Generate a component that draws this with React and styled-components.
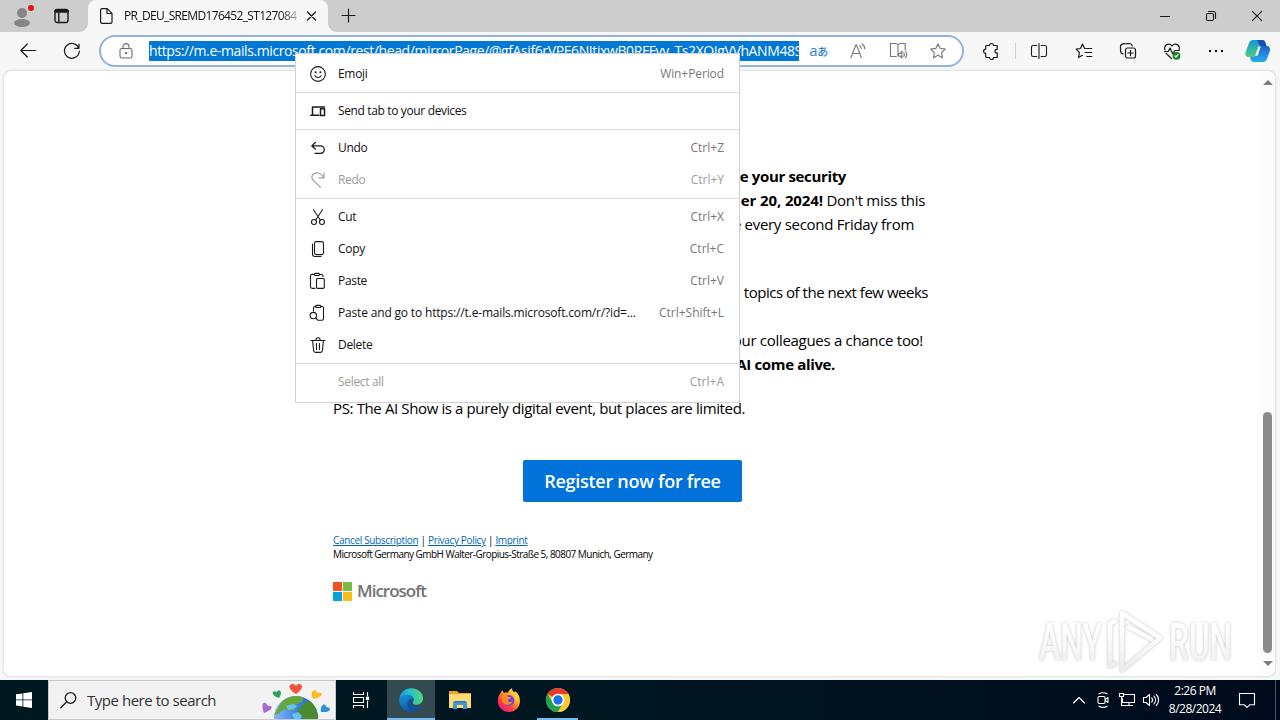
import React from "react";
import styled, { createGlobalStyle } from "styled-components";

const GlobalStyle = createGlobalStyle`
  * {
    box-sizing: border-box;
  }

  body {
    margin: 0;
    overflow: hidden;
    font-family: "Open Sans", "Noto Sans", sans-serif;
  }
`;

const Screen = styled.div`
  position: relative;
  display: flex;
  flex-direction: column;
  width: 1280px;
  height: 720px;
  background: #f7f7f7;
  color: #111;
`;

const Svg = styled.svg`
  display: block;
  flex: none;
  overflow: visible;
  fill: none;
  stroke: ${(props) => props.$color || "#1b1b1b"};
  stroke-width: ${(props) => props.$stroke || 1.1};
  stroke-linecap: round;
  stroke-linejoin: round;
`;

// ---------- tab strip ----------

const TabStrip = styled.div`
  display: flex;
  height: 32px;
  background: #cdcdcd;
`;

const Slot = styled.div`
  display: flex;
  flex: none;
  align-items: center;
  justify-content: center;
  width: ${(props) => props.$w}px;
  height: 32px;
`;

const Tab = styled.div`
  position: relative;
  display: flex;
  align-items: center;
  width: 240px;
  height: 32px;
  margin-left: 9px;
  padding: 0 10px 0 12px;
  border-radius: 8px 8px 0 0;
  background: #f7f7f7;

  &::before,
  &::after {
    content: "";
    position: absolute;
    bottom: 0;
    width: 8px;
    height: 8px;
  }
  &::before {
    left: -8px;
    background: radial-gradient(circle at 0 0, #cdcdcd 7.5px, #f7f7f7 8px);
  }
  &::after {
    right: -8px;
    background: radial-gradient(circle at 8px 0, #cdcdcd 7.5px, #f7f7f7 8px);
  }
`;

const TabTitle = styled.div`
  width: 174px;
  margin: 0 8px 1px 11px;
  overflow: hidden;
  white-space: nowrap;
  font-size: 12px;
  letter-spacing: -0.66px;
  mask-image: linear-gradient(90deg, #000 156px, rgba(0, 0, 0, 0.25) 174px);
`;

const WindowButtons = styled.div`
  display: flex;
  margin-left: auto;
`;

// ---------- toolbar ----------

const Toolbar = styled.div`
  display: flex;
  align-items: center;
  height: 38px;
  padding: 0 0 0 6px;
`;

const Address = styled.div`
  display: flex;
  align-items: center;
  width: 865px;
  height: 32px;
  margin: 0 5px;
  padding-left: 2px;
  border: 2px solid #94b2de;
  border-radius: 16px;
  background: #fff;
`;

const Url = styled.div`
  width: 650px;
  height: 20px;
  margin-left: 1px;
  overflow: hidden;
  background: #0078d4;
  color: #fff;
  font-size: 14px;
  line-height: 20px;
  letter-spacing: -0.4px;
  white-space: nowrap;
`;

const Translate = styled.span`
  color: #2f7fd0;
  font-family: "Open Sans", "Noto Sans CJK JP", sans-serif;
  font-size: 15px;
  line-height: 16px;
  letter-spacing: -0.5px;

  small {
    font-size: 11px;
    font-weight: 500;
  }
`;

const Divider = styled.div`
  width: 1px;
  height: 16px;
  margin: 0 1px 0 2px;
  background: #d0d0d0;
`;

// ---------- page ----------

const Page = styled.div`
  display: flex;
  width: 1273px;
  height: 607px;
  margin: 0 0 3px 3px;
  border: 1px solid #e4e4e4;
  border-radius: 8px;
  background: #fff;
  box-shadow: 0 0 2px rgba(0, 0, 0, 0.1);
`;

const Mail = styled.div`
  flex: 1;
  padding: 93px 0 0 329px;
`;

const Line = styled.p`
  width: ${(props) => props.$w}px;
  height: 24px;
  margin: 0 0 ${(props) => props.$after || 0}px;
  font-size: 15px;
  line-height: 24px;
  letter-spacing: ${(props) => props.$ls || -0.3}px;
  text-align: right;
  white-space: nowrap;
  color: #000;

  b {
    letter-spacing: ${(props) => props.$boldLs || -0.35}px;
  }
`;

const Register = styled.button`
  display: block;
  width: 219px;
  height: 42px;
  margin: 40px 0 31px 190px;
  padding: 0;
  border: 0;
  border-radius: 2px;
  background: #0072da;
  color: #fff;
  font-family: inherit;
  font-size: 18px;
  font-weight: 600;
  letter-spacing: -0.28px;
  white-space: nowrap;
`;

const Small = styled.div`
  height: 14px;
  font-size: 10px;
  line-height: 14px;
  letter-spacing: ${(props) => props.$ls}px;
  white-space: nowrap;
  color: #000;

  a {
    color: #0067b8;
    text-decoration: underline;
  }
`;

const Logo = styled.div`
  display: flex;
  align-items: center;
  gap: 5px;
  height: 20px;
  margin-top: 20px;
  color: #737373;
  font-size: 17px;
  font-weight: 600;
  letter-spacing: -1px;
  line-height: 20px;
`;

const LogoName = styled.span`
  padding-bottom: 1px;
`;

const LogoTiles = styled.div`
  display: grid;
  grid-template-columns: 9px 9px;
  grid-template-rows: 9px 9px;
  gap: 1px;
`;

const Tile = styled.i`
  background: ${(props) => props.$color};
`;

const ScrollBar = styled.div`
  display: flex;
  flex-direction: column;
  align-items: center;
  justify-content: space-between;
  width: 15px;
  padding: 9px 0 10px;
  border-radius: 0 8px 8px 0;
  background: #fcfcfc;
`;

const Arrow = styled.i`
  border: 5px solid transparent;
  border-top-width: 0;
  border-bottom: 5px solid #7c7c7c;
  transform: ${(props) => (props.$down ? "rotate(180deg)" : "none")};
`;

const Thumb = styled.div`
  width: 9px;
  height: 241px;
  margin: auto 0 8px;
  border-radius: 5px;
  background: #8b8b8b;
`;

const Watermark = styled.svg`
  position: absolute;
  left: 1030px;
  top: 604px;
  overflow: visible;
  filter: drop-shadow(0 0 1.5px rgba(0, 0, 0, 0.32));
  font-family: Roboto, sans-serif;
  font-weight: 500;
  opacity: 0.75;
`;

// ---------- context menu ----------

const Menu = styled.div`
  position: absolute;
  left: 295px;
  top: 53px;
  width: 445px;
  height: 350px;
  padding: 4px 0;
  border: 1px solid #d2d2d2;
  background: #fff;
`;

const Item = styled.div`
  display: flex;
  align-items: center;
  height: 32px;
  padding: 0 15px 0 14px;
  font-size: 12px;
  color: ${(props) => (props.$off ? "#9b9b9b" : "#111")};
`;

const ItemIcon = styled.div`
  width: 16px;
  height: 16px;
  margin-right: 12px;
`;

const Label = styled.span`
  padding-bottom: 2px;
  letter-spacing: ${(props) => props.$ls || -0.32}px;
  white-space: nowrap;
`;

const Shortcut = styled.span`
  margin-left: auto;
  padding-bottom: 2px;
  color: ${(props) => (props.$off ? "#9b9b9b" : "#777")};
  letter-spacing: ${(props) => props.$ls || 0}px;
`;

const Separator = styled.div`
  height: 1px;
  margin: 2px 0;
  background: #dcdcdc;
`;

// ---------- taskbar ----------

const Taskbar = styled.div`
  display: flex;
  height: 40px;
  background: linear-gradient(90deg, #001820 0, #001722 45%, #000a1c 100%);
`;

const TaskButton = styled.div`
  display: flex;
  align-items: center;
  justify-content: center;
  width: ${(props) => props.$w || 49}px;
  height: 40px;
  background: ${(props) => (props.$active ? "#344a51" : "transparent")};
  box-shadow: ${(props) => (props.$running ? "inset 0 -2px #76b9ed" : "none")};
`;

const Search = styled.div`
  display: flex;
  align-items: center;
  width: 288px;
  height: 40px;
  padding-left: 11px;
  border: 1px solid #c6cacb;
  background: #f2f2f2;
  color: #333;
  font-size: 15px;
  letter-spacing: -0.47px;
  white-space: nowrap;
  overflow: hidden;
`;

const SearchText = styled.span`
  width: 173px;
  margin-left: 10px;
`;

const Tray = styled.div`
  display: flex;
  align-items: center;
  margin-left: auto;
`;

const TrayIcon = styled.div`
  display: flex;
  justify-content: center;
  width: 24px;
`;

const Clock = styled.div`
  width: 56px;
  margin-left: 4px;
  color: #fff;
  font-size: 12px;
  line-height: 18px;
  letter-spacing: -0.5px;
  text-align: center;
  white-space: nowrap;
`;

const ShowDesktop = styled.div`
  width: 5px;
  height: 40px;
  margin-left: 4px;
  border-left: 1px solid #4b5563;
`;

// ---------- icons ----------

const Icon = ({ size = 16, color, stroke, children }) => (
  <Svg
    width={size}
    height={size}
    viewBox={`0 0 ${size} ${size}`}
    $color={color}
    $stroke={stroke}
  >
    {children}
  </Svg>
);

const menuIcons = {
  emoji: (
    <Icon>
      <circle cx="8" cy="8" r="7.4" />
      <path d="M4.8 9.8c1.4 2.2 5 2.2 6.4 0" />
      <circle cx="5.6" cy="6.2" r=".5" fill="#111" />
      <circle cx="10.4" cy="6.2" r=".5" fill="#111" />
    </Icon>
  ),
  send: (
    <Icon stroke={1.5}>
      <path d="M2.5 11.5V4h12M.8 12.2h8" />
      <rect x="10.5" y="5.8" width="4" height="6.6" />
    </Icon>
  ),
  undo: (
    <Icon stroke={1.3}>
      <path d="M5.3 2.5 1.8 5.9l3.500 3.200M2.300 5.900h8.300a3.700 3.700 0 0 1 0 7.400H5" />
    </Icon>
  ),
  redo: (
    <Icon color="#a0a0a0" stroke={1.2}>
      <path d="M14 .8v5H9M13.6 5.4C11-.2 3.9-.2 2.2 3.6c-.8 2-.1 3.5 1.2 4.8l7 6.8" />
    </Icon>
  ),
  cut: (
    <Icon>
      <path d="m3.5.8 7 10.4M12.5.8l-7 10.4" />
      <circle cx="4" cy="13" r="2.5" />
      <circle cx="12" cy="13" r="2.5" />
    </Icon>
  ),
  copy: (
    <Icon>
      <rect x="4.5" y=".6" width="9" height="13" rx="1.8" />
      <path d="M2.5 3v10c0 1.7 1 2.5 2.5 2.5h6" />
    </Icon>
  ),
  paste: (
    <Icon>
      <path d="M5 15.4H2.2c-1 0-1.7-.6-1.7-1.6V3c0-1 .6-1.6 1.6-1.6h2.4M9.5 1.5h2c1 0 1.5.6 1.5 1.5v.6" />
      <rect x="4.5" y=".4" width="5" height="2.1" rx="1" />
      <rect x="6.5" y="5.5" width="7.8" height="9.9" rx="1.2" />
    </Icon>
  ),
  pasteGo: (
    <Icon>
      <path d="M3.5 6V3c0-1 .5-1.5 1.5-1.5h1M11 1.5h1c1 0 1.5.5 1.5 1.5v10.5c0 1.2-.6 1.8-1.6 1.8H9.5" />
      <rect x="5.500" y=".4" width="5.500" height="2.1" rx="1" />
      <circle cx="3.300" cy="10.6" r="3.2" />
      <path d="m5.700 13 2.6 2.5" />
    </Icon>
  ),
  trash: (
    <Icon>
      <path d="M1 3.5h14M5.8 3.3c0-3.5 4.4-3.5 4.4 0M2.6 3.7l1 9.8c.1 1.2.8 1.9 1.9 1.9h5c1.1 0 1.8-.7 1.9-1.9l1-9.8M6.5 6.5v6M9.5 6.5v6" />
    </Icon>
  ),
};

const Lock = () => (
  <Icon color="#6d6d6d">
    <rect x="2" y="5.5" width="12" height="9.5" rx="1.8" />
    <path d="M5 5.5V3.6a3 3 0 0 1 6 0v1.9" />
    <circle cx="8" cy="10.2" r=".6" fill="#6d6d6d" />
  </Icon>
);

const ReadAloud = () => (
  <Icon color="#777">
    <path d="M.8 14.8 6 1.8h.4l5 13M2.5 10.5h7.2M9.8 2.8c1 .7 1.5 1.7 1.5 3M12 .8c1.8 1.2 2.7 3 2.7 5" />
  </Icon>
);

const Reader = () => (
  <Icon size={18} color="#777">
    <path d="M9 2.8V14M9 2.8C8.4 2 7.5 1.5 6.5 1.5h-5v13h5.8M9 2.8c.6-.8 1.5-1.3 2.5-1.3h4.7V8" />
    <path d="M9.5 11.5H11l2-2v6.5l-2-2H9.5zM14.8 11c.8 1 .8 2.5 0 3.5M16.5 9.7c1.5 1.8 1.5 4.3 0 6.1" />
  </Icon>
);

const Star = ({ color }) => (
  <Icon color={color}>
    <path d="m8 .7 2.2 4.7 5.1.6-3.7 3.6.9 5.2L8 12.3l-4.5 2.5.9-5.2L.7 6l5.1-.6z" />
  </Icon>
);

const Puzzle = () => (
  <Icon stroke={1.2}>
    <path d="M4.800 2.500h1.700a2 2 0 0 1 4 0h3.700v3.900c-3-.700-3 4.200 0 3.500v4.600h-3.700a2 2 0 0 1-4 0H3.700c-.700 0-1-.400-1-1v-3.100a2.100 2.100 0 0 1 0-4.200V3.500c0-.600.400-1 1-1z" />
  </Icon>
);

const Split = () => (
  <Icon>
    <path d="M8 .5v15M5.8 2.5H2.2c-1 0-1.700.6-1.700 1.6v7.8c0 1 .7 1.600 1.700 1.600h3.600M10.200 2.500h3.600c1 0 1.700.6 1.700 1.600v7.800c0 1-.7 1.600-1.700 1.600h-3.600" />
  </Icon>
);

const Favorites = () => (
  <Icon stroke={1.2}>
    <path d="M10 5.5H8.6L6.5.9 4.4 5.5l-4.2.6 3.2 3.4-.9 5 4-2.2M10.8 5.5h5M9 9.5h6.8M10.8 13.5h5" />
  </Icon>
);

const Collections = () => (
  <Icon stroke={1.2}>
    <rect x="5.5" y="5" width="10" height="10" rx="2" />
    <path d="M10.5 7.3v5.4M7.8 10h5.4M3.2 11C1.6 10.800.7 9.600.6 8.200L.5 3.800C.5 2 1.400.9 3.200.8l6-.3c1.600 0 2.700.8 3 2.300" />
  </Icon>
);

const Heart = () => (
  <Icon stroke={1.2}>
    <path d="M.8 7C-.3 1.8 5-.7 8 2.8 11-.7 16.3 1.8 15.2 7M2 10.2 7.5 15.5M.5 8.5h3.8L6 5l2.800 6 2-3.500h4.500" />
    <circle cx="12.5" cy="12.8" r="3.3" fill="#16831d" stroke="#16831d" />
    <path d="m11 13 1 1 2-2.400" stroke="#fff" />
  </Icon>
);

const Copilot = () => (
  <Svg width="26" height="26" viewBox="0 0 26 26">
    <defs>
      <linearGradient id="cpA" x1="0" y1="0" x2="0" y2="1">
        <stop offset="0" stopColor="#1597d4" />
        <stop offset=".7" stopColor="#35c09a" />
        <stop offset="1" stopColor="#63c679" />
      </linearGradient>
      <linearGradient id="cpB" x1="0" y1="0" x2="0" y2="1">
        <stop offset="0" stopColor="#1763c6" />
        <stop offset=".6" stopColor="#278ee8" />
        <stop offset="1" stopColor="#19b2e5" />
      </linearGradient>
    </defs>
    <g stroke="none">
      <path d="M8 2h9c2 0 3 1 3.5 3l1 3h-6l-3 9c-.6 1.5-1.5 2-3 2H4c-3 0-4-2-3.4-5L4 5c.7-2 2-3 4-3z" fill="url(#cpA)" />
      <path d="M16 8h6c2.5 0 3.5 2 2.8 5L22 21c-.8 2-2 3-4 3H9c-2 0-3-1-3.5-3L5 19h3c2 0 3-.7 3.6-2.5L14 9.500c.4-1 1-1.500 2-1.500z" fill="url(#cpB)" />
      <path d="M12 2h5c2 0 3 1 3.5 3l1 3H16c-1.500 0-2-1-2.500-3z" fill="#174fae" />
      <path d="M13.500 8.500h2.200l-3 9h-2.500z" fill="#fff" />
    </g>
  </Svg>
);

const Earth = () => (
  <Svg width="72" height="38" viewBox="0 0 72 38">
    <defs>
      <linearGradient id="sea">
        <stop offset="0" stopColor="#8ab4fb" />
        <stop offset=".5" stopColor="#3c86ea" />
        <stop offset="1" stopColor="#185fbe" />
      </linearGradient>
      <clipPath id="globe">
        <circle cx="36" cy="37" r="22" />
      </clipPath>
    </defs>
    <g stroke="none">
      <circle cx="36" cy="37" r="22" fill="url(#sea)" />
      <g clipPath="url(#globe)">
        <path d="M21 22c6-7 14-9 21-7l1 5-6 3-4 2 3 3-5 2-7-2-6 5-4 1z" fill="#67a83b" />
        <path d="M40 26l7-6 6 1 8 15-3 4H44l-3-6-5-2z" fill="#4a8b31" />
        <path d="m26 25 7-2 4 2-3 3-6 1zM32 33l6-2 4 4-3 5-5-2z" fill="#66c4f5" />
      </g>
      <path d="M36 13c-13-8-3-13 0-8 3-5 12 0 0 8z" fill="#f0543c" />
      <path d="M19 17c-10-3-6-9-2-6 1-4 7-1 2 6z" fill="#2c9f5c" />
      <path d="M53 18c-4-9 3-11 4-6 6-2 8 4-4 6z" fill="#f9bd24" />
      <path d="M4 32c-4-11 1-13 4-7 5-1 6 4-4 7z" fill="#a56bd0" />
      <path d="M61 31c-1-9 5-9 5-5 6 0 6 6-5 5z" fill="#2990df" />
    </g>
  </Svg>
);

const EdgeLogo = () => (
  <Svg width="24" height="24" viewBox="0 0 24 24">
    <defs>
      <linearGradient id="edA" x1="0" y1=".4" x2="1" y2=".3">
        <stop offset="0" stopColor="#1c9ee2" />
        <stop offset=".5" stopColor="#28c3c3" />
        <stop offset="1" stopColor="#58d870" />
      </linearGradient>
      <linearGradient id="edB" x1="0" y1="0" x2=".5" y2="1">
        <stop offset="0" stopColor="#1a94dd" />
        <stop offset="1" stopColor="#0c59a4" />
      </linearGradient>
    </defs>
    <g stroke="none">
      <path d="M.3 11C1 4.5 6 .2 12 .2c7 0 12 4.5 12 10 0 4-3 6.5-6.5 6.5-3 0-4-1.2-3.8-2 .3-.8 1-1.2 1-2.9C14.7 9 12 7 8.5 7 4.5 7 1.8 8.5.3 11z" fill="url(#edA)" />
      <path d="M.3 12C.8 8.5 4.3 6.8 8 6.8c3.8 0 6.5 2 6.7 5C12 10 8.6 12 8.6 15.5c0 4 3.4 7 8 7-1.5 1-3 1.3-4.6 1.3C5 23.8 0 18.5.3 12z" fill="url(#edB)" />
      <path d="M8.7 15.5c0-2.5 1.8-4.8 4.6-4.8-3 4 1 8.3 5 8.3 1.9 0 3-.7 3.800-1 1-.4 1.300.4.800 1.100-1.300 1.700-3.500 3.500-6.300 3.800-4.500.3-8-3-7.900-7.400z" fill="#124f93" />
    </g>
  </Svg>
);

const FolderLogo = () => (
  <Svg width="22" height="20" viewBox="0 0 22 20">
    <g stroke="none">
      <path d="M0 1h8l2 2h12v15H0z" fill="#e9a520" />
      <path d="M0 4h22v14H0z" fill="#ffda72" />
      <path d="M4 19v-6c0-1.200.8-2 2-2h10c1.200 0 2 .8 2 2v6h-4v-4H8v4z" fill="#3e98d8" />
      <path d="M6 11h10v1.500H6z" fill="#2b79bd" />
    </g>
  </Svg>
);

const FirefoxLogo = () => (
  <Svg width="24" height="24" viewBox="0 0 24 24">
    <defs>
      <linearGradient id="ff" x1=".9" y1=".1" x2=".2" y2="1">
        <stop offset="0" stopColor="#ffe23e" />
        <stop offset=".4" stopColor="#ff9a26" />
        <stop offset=".7" stopColor="#ff3b46" />
        <stop offset="1" stopColor="#e11586" />
      </linearGradient>
    </defs>
    <g stroke="none">
      <path d="M4 4.5 5 2l2 3c1-.5 3-.6 4-.2C11.5 2.5 13 1 15 .3c0 2 1 3 2.5 4.500.4-.4.500-1 .3-1.800C21 5 23 8.500 23 13c0 6.500-5 11-11 11S.8 19.500.8 13C.8 9.500 2 6.500 4 4.500z" fill="url(#ff)" />
      <circle cx="12" cy="12.5" r="5.4" fill="#7542d8" />
      <path d="M4.5 8.5c2.5-2 5-1.4 6.5.2l3 .8c-.5 1.5-2.8 1.5-3 2.5-.4 2 2 3 4.5 1.5-.8 3-5 4.500-8 2.200-2.200-1.700-3.300-4.500-3-7.200z" fill="#ff8b20" />
      <path d="M14 5c4 1.5 5 5.5 4 9l3-2c0-3-1-6-4-8z" fill="#ffd23d" />
    </g>
  </Svg>
);

const ChromeLogo = () => (
  <Svg width="24" height="24" viewBox="0 0 24 24">
    <g stroke="none">
      <circle cx="12" cy="12" r="12" fill="#fcc934" />
      <path d="M12 12 1.6 6A12 12 0 0 1 22.4 6L21 7H12z" fill="#e33b2e" />
      <path d="M1.6 6A12 12 0 0 0 12 24l5.2-9L12 12 7 15z" fill="#22a152" />
      <path d="M12 6h10.4A12 12 0 0 1 12 24l5.2-9z" fill="#fcc934" />
      <circle cx="12" cy="12" r="6.3" fill="#fff" />
      <circle cx="12" cy="12" r="4.700" fill="#1a73e8" />
    </g>
  </Svg>
);

// ---------- data ----------

const menuItems = [
  { label: "Emoji", icon: "emoji", keys: "Win+Period", keysLs: -0.1 },
  null,
  { label: "Send tab to your devices", icon: "send", ls: -0.36 },
  null,
  { label: "Undo", icon: "undo", keys: "Ctrl+Z" },
  { label: "Redo", icon: "redo", keys: "Ctrl+Y", off: true },
  null,
  { label: "Cut", icon: "cut", keys: "Ctrl+X" },
  { label: "Copy", icon: "copy", keys: "Ctrl+C" },
  { label: "Paste", icon: "paste", keys: "Ctrl+V" },
  {
    label: "Paste and go to https://t.e-mails.microsoft.com/r/?id=...",
    icon: "pasteGo",
    keys: "Ctrl+Shift+L",
    ls: -0.17,
  },
  { label: "Delete", icon: "trash" },
  null,
  { label: "Select all", keys: "Ctrl+A", off: true },
];

const ContextMenu = () => (
  <Menu>
    {menuItems.map((item, i) =>
      item ? (
        <Item key={i} $off={item.off}>
          <ItemIcon>{menuIcons[item.icon]}</ItemIcon>
          <Label $ls={item.ls}>{item.label}</Label>
          {item.keys && (
            <Shortcut $off={item.off} $ls={item.keysLs}>
              {item.keys}
            </Shortcut>
          )}
        </Item>
      ) : (
        <Separator key={i} />
      )
    )}
  </Menu>
);

const App = () => (
  <>
    <GlobalStyle />
    <Screen>
      <TabStrip>
        <Slot $w={44}>
          <Svg width="22" height="22" viewBox="0 0 22 22">
            <g stroke="none">
              <circle cx="11" cy="8" r="5" fill="#858585" />
              <ellipse cx="11" cy="18" rx="8" ry="4" fill="#858585" />
              <circle cx="20" cy="3" r="3" fill="#e3131b" />
            </g>
          </Svg>
        </Slot>
        <Slot $w={35}>
          <Svg width="16" height="16" viewBox="0 0 16 16" $stroke={1.4}>
            <rect x="1" y="1.5" width="13" height="13" rx="2.2" />
            <path d="M1.5 3.3h12" strokeWidth="3" />
            <path d="M4.8 4.5v10" />
          </Svg>
        </Slot>
        <Tab>
          <Svg width="13" height="16" viewBox="0 0 13 16" $stroke={1.2}>
            <path d="M2 .6h5.200L12 5.400V14c0 .9-.5 1.400-1.400 1.400H2C1.100 15.400.6 14.900.6 14V2C.6 1.100 1.100.6 2 .6zM7 .8v4.700h4.800" />
          </Svg>
          <TabTitle>PR_DEU_SREMD176452_ST127084</TabTitle>
          <Icon size={10} stroke={1.3}>
            <path d="m1.500 1 8 8M9.500 1l-8 8" />
          </Icon>
        </Tab>
        <Slot $w={40}>
          <Icon size={14} stroke={1.2}>
            <path d="M7.500 0v13M1 6.500h13" />
          </Icon>
        </Slot>
        <WindowButtons>
          <Slot $w={46}>
            <Icon size={10}>
              <path d="M.5 5.5h9" />
            </Icon>
          </Slot>
          <Slot $w={46}>
            <Icon size={10}>
              <rect x=".5" y="2.5" width="7" height="7" rx="1.2" />
              <path d="M2.5.5h5c1.300 0 2 .7 2 2v5" />
            </Icon>
          </Slot>
          <Slot $w={46}>
            <Icon size={10}>
              <path d="m.3.3 9.400 9.400M9.700.3.3 9.700" />
            </Icon>
          </Slot>
        </WindowButtons>
      </TabStrip>

      <Toolbar>
        <Slot $w={44}>
          <Icon stroke={1.2}>
            <path d="M15.500 7.500H.8M7.300 1 .8 7.500 7.300 14" />
          </Icon>
        </Slot>
        <Slot $w={44}>
          <Icon stroke={1.2}>
            <path d="M14.8 5.2A7.400 7.400 0 1 0 15.300 8M15 1v4.300h-4.300" />
          </Icon>
        </Slot>
        <Address>
          <Slot $w={45}>
            <Lock />
          </Slot>
          <Url>
            https://m.e-mails.microsoft.com/rest/head/mirrorPage/@gfAsif6rVPE6NItixwB0RFFvv_Ts2XQIgVVhANM48S
          </Url>
          <Slot $w={39}>
            <Translate>
              a<small>あ</small>
            </Translate>
          </Slot>
          <Slot $w={40}>
            <ReadAloud />
          </Slot>
          <Slot $w={40}>
            <Reader />
          </Slot>
          <Slot $w={40}>
            <Star color="#777" />
          </Slot>
        </Address>
        <Slot $w={44}>
          <Puzzle />
        </Slot>
        <Divider />
        <Slot $w={44}>
          <Split />
        </Slot>
        <Slot $w={45}>
          <Favorites />
        </Slot>
        <Slot $w={44}>
          <Collections />
        </Slot>
        <Slot $w={44}>
          <Heart />
        </Slot>
        <Slot $w={44}>
          <Icon>
            <g fill="#111" stroke="none">
              <circle cx="2" cy="8" r="1.2" />
              <circle cx="8" cy="8" r="1.2" />
              <circle cx="14" cy="8" r="1.2" />
            </g>
          </Icon>
        </Slot>
        <Slot $w={40}>
          <Copilot />
        </Slot>
      </Toolbar>

      <Page>
        <Mail>
          <Line $w={513}>
            <b>e your security</b>
          </Line>
          <Line $w={592} $boldLs={-0.12}>
            <b>er 20, 2024!</b> Don't miss this
          </Line>
          <Line $w={581} $after={44}>
            e every second Friday from
          </Line>
          <Line $w={595} $after={24} $ls={-0.48}>
            topics of the next few weeks
          </Line>
          <Line $w={590}>our colleagues a chance too!</Line>
          <Line $w={502} $after={20}>
            <b>AI come alive.</b>
          </Line>
          <Line $w={412} $ls={-0.38}>
            PS: The AI Show is a purely digital event, but places are limited.
          </Line>
          <Register>Register now for free</Register>
          <Small $ls={-0.34}>
            <a>Cancel Subscription</a> | <a>Privacy Policy</a> | <a>Imprint</a>
          </Small>
          <Small $ls={-0.54}>
            Microsoft Germany GmbH Walter-Gropius-Straße 5, 80807 Munich, Germany
          </Small>
          <Logo>
            <LogoTiles>
              <Tile $color="#f05125" />
              <Tile $color="#7eba42" />
              <Tile $color="#05a4dc" />
              <Tile $color="#fbbc1c" />
            </LogoTiles>
            <LogoName>Microsoft</LogoName>
          </Logo>
        </Mail>
        <ScrollBar>
          <Arrow />
          <Thumb />
          <Arrow $down />
        </ScrollBar>
      </Page>

      <Taskbar>
        <TaskButton $w={48}>
          <Svg width="16" height="16" viewBox="0 0 16 16">
            <path
              d="M0 2.3 6.5 1.4v6.1H0zM7.300 1.300 16 0v7.500H7.300zM0 8.300h6.500v6.200L0 13.600zM7.300 8.300H16V16l-8.700-1.300z"
              fill="#fff"
              stroke="none"
            />
          </Svg>
        </TaskButton>
        <Search>
          <Icon stroke={1.3} size={17}>
            <circle cx="10.5" cy="6" r="5.3" />
            <path d="M6.5 10 .8 15.8" />
          </Icon>
          <SearchText>Type here to search</SearchText>
          <Earth />
        </Search>
        <TaskButton $w={51}>
          <Svg width="18" height="16" viewBox="0 0 18 16" $color="#fff">
            <path d="M.5.500v2h10v-2M.5 15.500v-2h10v2M.5 5.500h10v5H.500zM14.500.500v3M14.500 9v6.500" />
            <path d="M13.500 5h2v2.500h-2z" fill="#fff" />
          </Svg>
        </TaskButton>
        <TaskButton $w={48} $active $running>
          <EdgeLogo />
        </TaskButton>
        <TaskButton>
          <FolderLogo />
        </TaskButton>
        <TaskButton>
          <FirefoxLogo />
        </TaskButton>
        <TaskButton $w={4} />
        <TaskButton $w={41} $running>
          <ChromeLogo />
        </TaskButton>
        <Tray>
          <TrayIcon>
            <Svg width="12" height="8" viewBox="0 0 12 8" $color="#fff">
              <path d="m.5 7 5.500-5.500L11.500 7" />
            </Svg>
          </TrayIcon>
          <TrayIcon>
            <Icon color="#fff">
              <rect x="3" y="4.5" width="7" height="7" rx="1.2" />
              <path d="m10.500 7.200 2.500-1.700v5l-2.500-1.700M4 1.800C6 .3 10 .3 12 1.800M4 14.200c2 1.500 6 1.500 8 0" />
            </Icon>
          </TrayIcon>
          <TrayIcon>
            <Icon color="#fff">
              <path d="M5.500 2.500h10v8h-12v-4M10 10.500v3M6.500 13.500h7M.5 1.500h4v3h-4zM2.500 4.500v9h3" />
            </Icon>
          </TrayIcon>
          <TrayIcon>
            <Icon color="#fff">
              <path d="M.5 5.500H3l3.500-3v11l-3.500-3H.5zM8.700 5.800c1 1.200 1 3.200 0 4.400M11 4.200c2 2.200 2 5.400 0 7.600M13.300 2.500c3 3 3 8 0 11" />
            </Icon>
          </TrayIcon>
          <Clock>
            2:26 PM
            <br />
            8/28/2024
          </Clock>
          <TaskButton $w={48}>
            <Icon color="#fff">
              <path d="M.5 1.500h15v11.300h-4.800L8 15.300l-2.700-2.500H.5z" />
            </Icon>
          </TaskButton>
          <ShowDesktop />
        </Tray>
      </Taskbar>

      <Watermark width="210" height="76" viewBox="0 0 210 76">
        <defs>
          <linearGradient id="fade" x1="0" y1="0" x2="0" y2="1">
            <stop offset=".3" stopColor="#fff" />
            <stop offset="1" stopColor="#e6e6e6" />
          </linearGradient>
        </defs>
        <g fill="url(#fade)" fontSize="52">
          <text x="9" y="56" textLength="63" lengthAdjust="spacingAndGlyphs">
            ANY
          </text>
          <text x="139" y="56" textLength="63" lengthAdjust="spacingAndGlyphs">
            RUN
          </text>
        </g>
        <path
          d="M86 16l-6 4v42l6-3M92 9l38 25-38 32zM92 9v57M97 22l26 14"
          fill="none"
          stroke="url(#fade)"
          strokeWidth="4.500"
          strokeLinejoin="round"
        />
      </Watermark>

      <ContextMenu />
    </Screen>
  </>
);

export default App;
